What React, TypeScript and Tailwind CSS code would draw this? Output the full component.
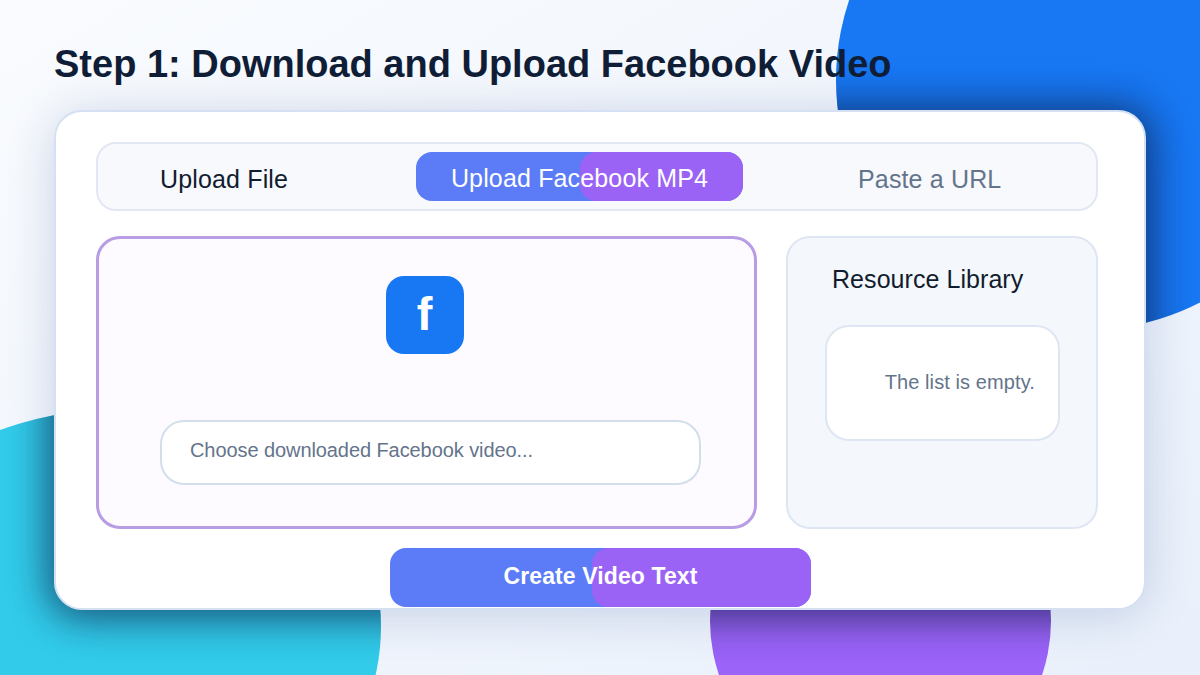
const font = "font-['Liberation_Sans',Arial,sans-serif]";

const Blob = ({ className, shadowPos }: { className: string; shadowPos: string }) => (
  <div className={`absolute overflow-hidden ${className}`}>
    <div className={`absolute w-[1092px] h-[500px] rounded-[28px] shadow-[0_2px_36px_6px_rgba(10,20,50,0.58)] ${shadowPos}`} />
  </div>
);

const GradientPill = ({ className, overlay, children }: { className: string; overlay: string; children: React.ReactNode }) => (
  <div className={`relative flex items-center justify-center bg-[#5b7cf6] text-white ${className}`}>
    <div className={`absolute top-0 bottom-0 right-0 bg-[#9b63f5] ${overlay}`} />
    <span className="relative">{children}</span>
  </div>
);

export default function App() {
  return (
    <div className={`relative w-[1200px] h-[675px] overflow-hidden bg-gradient-to-br from-[#f9fbfe] to-[#e9f0fb] ${font}`}>
      <Blob className="left-[836px] top-[-170px] w-[500px] h-[500px] rounded-full bg-[#1877f2]" shadowPos="left-[-782px] top-[280px]" />
      <Blob className="left-[-79px] top-[407px] w-[460px] h-[439px] rounded-[229px_230px_230px_230px/105px_230px_230px_230px] bg-[#32cbea]" shadowPos="left-[133px] top-[-297px]" />
      <Blob className="left-[710px] top-[450px] w-[341px] h-[341px] rounded-full bg-[#9b63f8]" shadowPos="left-[-656px] top-[-340px]" />

      <div className="relative px-[54px] pt-[42px]">
        <h1 className="h-[44px] mb-6 text-[38px] leading-[44px] font-bold text-[#0f1e36]">
          Step 1: Download and Upload Facebook Video
        </h1>

        <div className="w-[1092px] h-[500px] pl-10 pr-[46px] pt-[30px] bg-white border-2 border-[#d5e0f2] rounded-[28px] shadow-[0_4px_48px_rgba(30,60,130,0.2)]">
          <div className="flex items-center h-[69px] bg-[#f7f9fd] border-2 border-[#e2e8f3] rounded-[20px] text-[25px] tracking-[0.15px]">
            <div className="w-[318px] pl-[62px] pt-[7px] text-[#111c2e]">Upload File</div>
            <GradientPill className="w-[327px] h-[49px] pt-[5px] rounded-[16px]" overlay="left-[164px] rounded-[16px]">
              Upload Facebook MP4
            </GradientPill>
            <div className="pl-[115px] pt-[7px] text-[#64748b]">Paste a URL</div>
          </div>

          <div className="flex gap-[29px] mt-[25px]">
            <div className="shrink-0 w-[661px] h-[293px] pl-[61px] pt-[37px] bg-[#fdfbff] border-[3px] border-[#b89ce4] rounded-[24px]">
              <div className="flex items-center justify-center w-[78px] h-[78px] ml-[226px] pb-[2px] pr-[1px] bg-[#1877f2] rounded-[18px] text-white text-[47px] font-bold">
                f
              </div>
              <div className="flex items-center w-[541px] h-[65px] mt-[66px] pl-[28px] pb-[5px] bg-white border-2 border-[#d3deeb] rounded-[24px] text-[20px] tracking-[-0.08px] text-[#64748b]">
                Choose downloaded Facebook video...
              </div>
            </div>

            <div className="shrink-0 w-[312px] h-[293px] bg-[#f4f7fc] border-2 border-[#dfe6f3] rounded-[24px] pl-[37px] pt-[26px]">
              <div className="pl-[7px] text-[25px] leading-[30px] tracking-[0.06px] text-[#111c2e]">Resource Library</div>
              <div className="flex items-center justify-end w-[235px] h-[116px] mt-[31px] pr-[23px] pb-[2px] bg-white border-2 border-[#dfe6f3] rounded-[24px] text-[20px] tracking-[0.1px] text-[#64748b]">
                The list is empty.
              </div>
            </div>
          </div>

          <GradientPill className="w-[421px] h-[59px] mt-[19px] ml-[294px] pb-[2px] rounded-[16px] text-[23px] tracking-[0.1px] font-bold" overlay="left-[202px] rounded-[16px]">
            Create Video Text
          </GradientPill>
        </div>
      </div>
    </div>
  );
}
